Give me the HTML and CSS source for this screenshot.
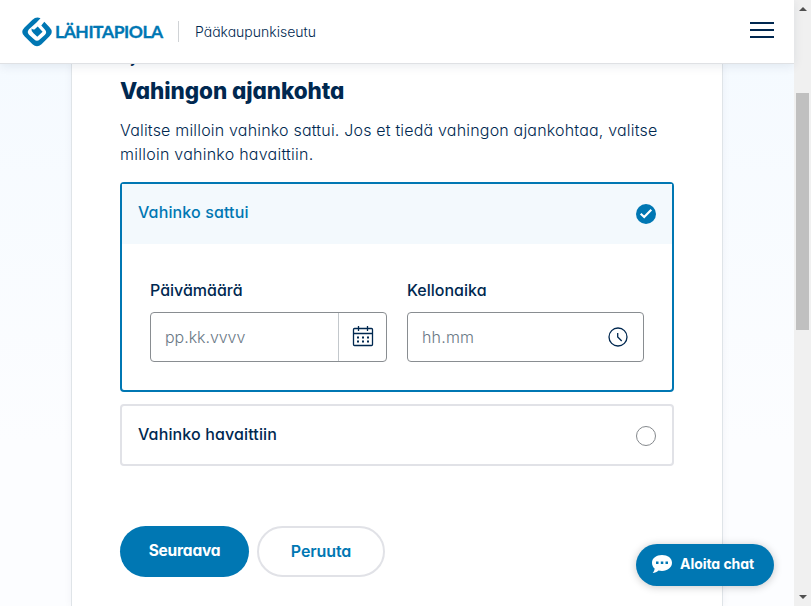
FILE: index.html
```html
<!DOCTYPE html>
<html lang="fi">
<head>
<meta charset="utf-8">
<title>Vahingon ajankohta</title>
<link rel="stylesheet" href="styles.css">
</head>
<body>
<div class="page">
  <header class="header">
    <svg class="logo" width="30" height="30" viewBox="0 0 30 30">
      <path d="M18.500 1.300L14.500 5.400L7 12.200Q4.500 15 7 17.700L12.300 22.600Q15 25 17.700 22.600L23 17.700Q25.300 15.300 23 12.700L19.300 8.600L22.300 4.800L27.500 10.300Q32 15 27.500 19.300L19.500 27.300Q15 31.400 10.500 27.300L2.500 19.300Q-2 15 2.500 10.500L10.500 2.800Q14.300-.900 18.500 1.300Z" fill="#0077b3"/>
      <path d="M9.500 11.500Q11.500 13.300 13 12L15.700 9.600L20.600 14.700L15.300 19.800L11.500 16.300Q9 14.300 9.500 11.500Z" fill="#0077b3"/>
    </svg>
    <span class="brand">LÄHITAPIOLA</span>
    <span class="region">Pääkaupunkiseutu</span>
    <svg class="menu" width="24" height="16" viewBox="0 0 24 16"><path d="M0 1h24M0 8h24M0 15h24" stroke="#002850" stroke-width="2"/></svg>
  </header>
  <main class="main">
    <section class="sheet">
      <div class="step">Ajoneuvovahinko</div>
      <h1>Vahingon ajankohta</h1>
      <p class="intro"><span class="intro-start">Valitse milloin vahinko sattui. Jos et tiedä vahingon ajankohtaa, valitse</span><br><span>milloin vahinko havaittiin.</span></p>
      <div class="option selected">
        <div class="option-head"><span>Vahinko sattui</span>
          <svg width="20" height="20" viewBox="0 0 20 20"><circle cx="10" cy="10" r="10" fill="#0077b3"/><path d="M4.700 9.800L8.200 13L15.300 5.800" fill="none" stroke="#fff" stroke-width="2.200"/></svg>
        </div>
        <div class="fields">
          <div class="field"><label>Päivämäärä</label>
            <div class="input"><span class="date-hint">pp.kk.vvvv</span>
              <div class="picker"><svg width="22" height="22" viewBox="0 0 22 22" fill="none" stroke="#002850" stroke-width="1.300"><rect x="1.500" y="2.500" width="19" height="17" rx="1"/><path d="M1.500 7.500h19M6.500 0v5M15.500 0v5"/><path d="M5 11.500h2M10 11.500h2M15 11.500h2M5 15.500h2M10 15.500h2M15 15.500h2" stroke-width="1.800"/></svg></div>
            </div>
          </div>
          <div class="field"><label>Kellonaika</label>
            <div class="input clock"><span>hh.mm</span>
              <svg width="20" height="20" viewBox="0 0 20 20" fill="none" stroke="#002850" stroke-width="1.300"><circle cx="10" cy="10" r="9"/><path d="M9.700 6V10L13.700 14"/></svg>
            </div>
          </div>
        </div>
      </div>
      <div class="option"><div class="option-head"><span>Vahinko havaittiin</span><i class="radio"></i></div></div>
      <div class="actions">
        <div class="btn primary"><span>Seuraava</span></div>
        <div class="btn secondary"><span>Peruuta</span></div>
      </div>
    </section>
  </main>
  <div class="chat">
    <svg width="20" height="20" viewBox="0 0 20 20"><path d="M10 1C4.400 1 0 4.200 0 8.700c0 2.400 1 4.400 2.600 5.800c0 1.800-.900 3.400-1.900 4.500c2.200 0 4.300-1 5.800-2.500c1.100.300 2.300.400 3.500.400c5.600 0 10-3.600 10-8.200S15.600 1 10 1z" fill="#fff"/><path d="M4 8.800h2.500M8.800 8.800h2.500M13.500 8.800h2.500" stroke="#0077b3" stroke-width="2.500"/></svg>
    <span>Aloita chat</span>
  </div>
</div>
<div class="scrollbar"><i class="up"></i><i class="thumb"></i><i class="down"></i></div>
</body>
</html>
```
FILE: styles.css
```css
* { box-sizing: border-box; }
body { margin: 0; width: 811px; height: 606px; overflow: hidden; display: flex; font: 16px/24px Inter, sans-serif; font-feature-settings: "cv11"; color: #002850; }
.page { width: 794px; height: 606px; display: flex; flex-direction: column; position: relative; }
.header { height: 64px; flex: none; display: flex; align-items: center; padding: 0 20px 0 22px; background: #fff; border-bottom: 1px solid #dfe1e4; box-shadow: 0 2px 10px rgba(0,40,80,.09); z-index: 2; }
.logo { flex: none; }
.brand { font: 700 17.500px/30px Lato, sans-serif; color: #0077b3; margin-left: 3px; width: 109px; white-space: nowrap; letter-spacing: -.450px; -webkit-text-stroke: .300px #0077b3; }
.region { margin-left: 14px; padding-left: 16px; line-height: 21px; border-left: 1px solid #d0d3d6; font-size: 14px; font-weight: 300; }
.menu { margin-left: auto; margin-top: -3px; }
.main { flex: 1; min-height: 0; overflow: hidden; display: flex; justify-content: center; background: linear-gradient(#f5faff, #fcfdff 70%); }
.sheet { width: 652px; padding: 0 48px; background: #fff; border: solid #dfe4e8; border-width: 0 1px; box-shadow: 0 0 8px rgba(0,40,80,.05); white-space: nowrap; }
.step { font-size: 15px; font-weight: 700; line-height: 20px; height: 20px; margin-top: -16px; }
h1 { margin: 8px 0 0; font-size: 22.500px; font-weight: 800; line-height: 30px; letter-spacing: -.080px; }
.intro { margin: 12px 0 16px; font-weight: 350; letter-spacing: .250px; }
.intro-start { letter-spacing: .190px; }
.option { width: 554px; border: 2px solid #e1e2e7; border-radius: 4px; }
.option-head { height: 58px; padding: 0 16px; display: flex; align-items: center; justify-content: space-between; font-weight: 550; letter-spacing: .130px; }
.selected { height: 210px; border-color: #0077b3; margin-bottom: 12px; }
.selected .option-head { height: 60px; background: #f3f9fd; color: #0077b3; }
.option-head span { margin-top: -2px; }
.selected .option-head span { margin-top: -4px; }
.option-head .radio { width: 20px; height: 20px; margin-top: 2px; border: 1px solid #85898d; border-radius: 50%; }
.fields { display: flex; gap: 20px; padding: 34px 28px 0; }
.field { width: 237px; display: flex; flex-direction: column; font-weight: 550; }
.input { height: 50px; margin-top: 10px; border: 1px solid #898d91; border-radius: 4px; padding-left: 14px; display: flex; align-items: center; justify-content: space-between; color: #6a7885; font-weight: 350; letter-spacing: .200px; }
.date-hint { letter-spacing: -.050px; }
.picker { width: 48px; height: 48px; border-left: 1px solid #c3c8cc; display: flex; align-items: center; justify-content: center; }
.clock { padding-right: 15px; }
.actions { display: flex; gap: 8px; margin-top: 60px; }
.btn { height: 51px; border-radius: 26px; display: flex; align-items: center; justify-content: center; font-weight: 600; padding-bottom: 1px; }
.primary { width: 129px; background: #0077b3; color: #fff; font-size: 15.500px; font-weight: 700; letter-spacing: -.200px; }
.secondary { width: 128px; border: 2px solid #e1e2e7; color: #0077b3; letter-spacing: -.100px; padding-bottom: 2px; }
.chat { position: absolute; right: 20px; bottom: 20px; width: 138px; height: 42px; padding-left: 16px; border-radius: 21px; background: #0077b3; color: #fff; display: flex; align-items: center; gap: 8px; font-size: 14px; font-weight: 700; white-space: nowrap; box-shadow: 0 1px 8px rgba(0,0,0,.22); z-index: 3; letter-spacing: -.050px; }
.chat svg, .chat span { margin-top: -2px; }
.scrollbar { width: 17px; height: 606px; background: #f0f0f0; display: flex; flex-direction: column; align-items: center; }
.up { margin-top: 7px; border: 4px solid transparent; border-top: 0; border-bottom-color: #505050; }
.thumb { width: 13px; height: 237px; margin-top: 82px; background: #c0c0c0; }
.down { margin-top: auto; margin-bottom: 7px; border: 4px solid transparent; border-bottom: 0; border-top-color: #505050; }
```
